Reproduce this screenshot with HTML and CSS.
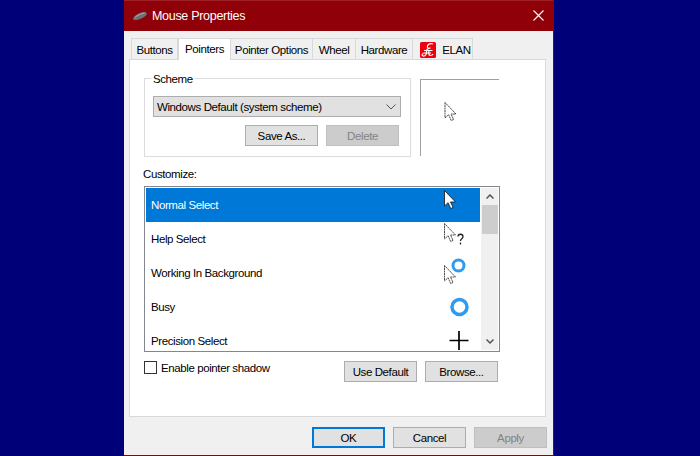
FILE: index.html
```html
<!DOCTYPE html>
<html lang="en">
<head>
<meta charset="utf-8">
<title>Mouse Properties</title>
<link rel="stylesheet" href="styles.css">
</head>
<body>
<svg class="defs" width="0" height="0" aria-hidden="true">
  <defs>
    <path id="arrow" d="M0 0V15.5L3.6 12.2L6.2 18L8.6 17L6 11.5H11Z"/>
  </defs>
</svg>
<div class="window">
  <header class="titlebar">
    <svg class="mouse-icon" width="16" height="10" viewBox="0 0 16 10"><path d="M1 7.500C1 5.500 8 1 12 1C15 1 15.500 3 14 4.500C11.500 7 5 9.500 2.500 9C1.500 8.800 1 8.400 1 7.500Z" fill="#6d7275"/><path d="M3 6.500C5 4.500 9 2.500 12.500 2" stroke="#a9adb0" fill="none"/></svg>
    <span class="title">Mouse Properties</span>
    <svg class="close" width="11" height="11" viewBox="0 0 11 11"><path d="M0.500 0.500L10.500 10.500M10.500 0.500L0.500 10.500" stroke="#fff" stroke-width="1.100"/></svg>
  </header>
  <nav class="tabs">
    <span class="tab tab-buttons">Buttons</span>
    <span class="tab tab-pointers">Pointers</span>
    <span class="tab tab-options">Pointer Options</span>
    <span class="tab tab-wheel">Wheel</span>
    <span class="tab tab-hardware">Hardware</span>
    <span class="tab tab-elan">
      <svg width="16" height="16" viewBox="0 0 16 16"><rect width="16" height="16" rx="1.500" fill="#f0000f"/><path d="M13 2C10.500 1 8 2 7.500 4C7 6 8.500 7 10.500 6M10.500 6C8 6 6.500 7.500 6.500 9.500C6.500 12 5.500 14.500 3 14C1.500 13.500 2 11.500 3.500 11.500M4 8.500H12.500M3.500 11H11M9 9C8.500 11 8.500 13.500 10.500 13.500C11.500 13.500 12.500 13 13 12" stroke="#fff" stroke-width="1.200" fill="none"/></svg>
      ELAN
    </span>
  </nav>
  <main class="panel">
    <div class="top-row">
      <section class="scheme">
        <span class="legend">Scheme</span>
        <div class="select">
          <span>Windows Default (system scheme)</span>
          <svg width="10" height="6" viewBox="0 0 10 6"><path d="M0.500 0.500L5 5L9.500 0.500" stroke="#555" fill="none"/></svg>
        </div>
        <div class="scheme-actions">
          <span class="btn">Save As...</span>
          <span class="btn btn-disabled">Delete</span>
        </div>
      </section>
      <div class="preview">
        <svg width="14" height="20" viewBox="0 0 14 20"><use href="#arrow" x="1" y="0.500" fill="#fff" stroke="#222" stroke-width="0.800" stroke-dasharray="2 0.500"/></svg>
      </div>
    </div>
    <label class="customize-label">Customize:</label>
    <div class="list">
      <div class="rows">
        <div class="row row-selected">
          <span class="row-text">Normal Select</span>
          <svg width="30" height="34" viewBox="0 0 30 34"><use href="#arrow" x="4.500" y="2.500" fill="#fff" stroke="#111" stroke-width="0.800"/></svg>
        </div>
        <div class="row">
          <span class="row-text">Help Select</span>
          <svg width="30" height="34" viewBox="0 0 30 34"><use href="#arrow" x="4.500" y="1.500" fill="#fff" stroke="#222" stroke-width="0.800" stroke-dasharray="2 0.500"/><path d="M18 14.500C18 11.500 23 11.500 23 14.500C23 17 20.500 16.500 20.500 19M20.500 20.500V22.500" stroke="#222" stroke-width="1.300" fill="none"/></svg>
        </div>
        <div class="row">
          <span class="row-text">Working In Background</span>
          <svg width="30" height="34" viewBox="0 0 30 34"><use href="#arrow" x="4.500" y="9.500" fill="#fff" stroke="#222" stroke-width="0.800" stroke-dasharray="2 0.500"/><circle cx="18.500" cy="9.500" r="5.500" fill="none" stroke="#2e9bf0" stroke-width="3"/></svg>
        </div>
        <div class="row">
          <span class="row-text">Busy</span>
          <svg width="30" height="34" viewBox="0 0 30 34"><circle cx="19.500" cy="17" r="7.500" fill="none" stroke="#2e9bf0" stroke-width="3.500"/></svg>
        </div>
        <div class="row row-clipped">
          <span class="row-text">Precision Select</span>
          <svg width="30" height="34" viewBox="0 0 30 34"><path d="M9.500 16.500H28.500M19 7V26" stroke="#000" stroke-width="1.700"/></svg>
        </div>
      </div>
      <div class="scrollbar">
        <svg class="scroll-arrow" width="8" height="5" viewBox="0 0 8 5"><path d="M0.500 4.500L4 1L7.500 4.500" stroke="#555" stroke-width="1.500" fill="none"/></svg>
        <div class="thumb"></div>
        <svg class="scroll-arrow scroll-down" width="8" height="5" viewBox="0 0 8 5"><path d="M0.500 0.500L4 4L7.500 0.500" stroke="#555" stroke-width="1.500" fill="none"/></svg>
      </div>
    </div>
    <div class="list-actions">
      <label class="check"><span class="box"></span>Enable pointer shadow</label>
      <div class="list-buttons">
        <span class="btn">Use Default</span>
        <span class="btn">Browse...</span>
      </div>
    </div>
  </main>
  <footer class="footer">
    <span class="btn btn-default">OK</span>
    <span class="btn">Cancel</span>
    <span class="btn btn-disabled">Apply</span>
  </footer>
</div>
</body>
</html>
```

FILE: styles.css
```css
* { box-sizing: border-box; }
html, body { margin: 0; height: 100%; }
body {
  background: #000078;
  font-family: "Liberation Sans", Arial, sans-serif;
  font-size: 11.5px;
  letter-spacing: -0.4px;
  color: #000;
  overflow: hidden;
}
.defs { position: absolute; }
.window {
  width: 430px;
  height: 456px;
  margin-left: 124px;
  background: #f0f0f0;
  border-right: 1px solid #8f0009;
  border-bottom: 1px solid #8f0009;
  display: flex;
  flex-direction: column;
}
.titlebar {
  height: 31px;
  flex: none;
  background: #900008;
  border-top: 1px solid #a02028;
  color: #fff;
  display: flex;
  align-items: center;
  padding: 0 9px 0 8px;
}
.mouse-icon { margin-right: 4px; }
.close { margin-bottom: 1px; }
.title { font-size: 12.5px; letter-spacing: -0.3px; flex: 1; }
.tabs {
  display: flex;
  height: 28px;
  flex: none;
  padding: 7px 0 0 7px;
  align-items: flex-end;
}
.tab {
  height: 21px;
  border: 1px solid #d9d9d9;
  border-bottom: 0;
  border-left: 0;
  display: flex;
  align-items: center;
  justify-content: center;
  white-space: nowrap;
  gap: 6px;
  padding-top: 2px;
}
.tab-buttons { width: 47px; border-left: 1px solid #d9d9d9; }
.tab-pointers {
  width: 53px;
  height: 22px;
  margin-bottom: -1px;
  background: #fff;
  border-left: 1px solid #d9d9d9;
  margin-top: -1px;
  position: relative;
  z-index: 1;
  padding: 0 0 2px;
}
.tab-options { width: 82px; }
.tab-wheel { width: 43px; }
.tab-hardware { width: 57px; }
.tab-elan { width: 60px; padding-left: 6px; }
.panel {
  width: 417px;
  height: 358px;
  margin-left: 5px;
  flex: none;
  background: #fff;
  border: 1px solid #d9d9d9;
  padding: 18px 0 0 14px;
}
.top-row { display: flex; gap: 9px; align-items: flex-start; }
.scheme {
  width: 267px;
  height: 79px;
  border: 1px solid #dcdcdc;
  padding: 17px 10px 0 8px;
  position: relative;
}
.legend {
  position: absolute;
  left: 6px;
  top: -7px;
  background: #fff;
  padding: 0 2px;
  line-height: 15px;
}
.select {
  height: 21px;
  width: 248px;
  background: #e1e1e1;
  border: 1px solid #adadad;
  display: flex;
  align-items: center;
  justify-content: space-between;
  padding: 0 4px 0 3px;
}
.scheme-actions {
  display: flex;
  justify-content: flex-end;
  gap: 8px;
  margin-top: 8px;
  padding-right: 1px;
}
.btn {
  width: 73px;
  height: 21px;
  background: #e1e1e1;
  border: 1px solid #adadad;
  display: flex;
  align-items: center;
  justify-content: center;
  white-space: nowrap;
  flex: none;
}
.btn-disabled {
  background: #cccccc;
  border-color: #bfbfbf;
  color: #838383;
}
.btn-default { border: 2px solid #0078d7; }
.preview {
  width: 79px;
  height: 77px;
  margin-top: 1px;
  border-top: 1px solid #a0a0a0;
  border-left: 1px solid #a0a0a0;
  padding: 22px 0 0 23px;
}
.preview svg { display: block; }
.customize-label { display: block; margin: 9px 0 0 -1px; line-height: 16px; height: 20px; }
.list {
  width: 356px;
  height: 166px;
  border: 1px solid #828790;
  padding: 1px;
  display: flex;
}
.rows { width: 335px; height: 162px; overflow: hidden; }
.row {
  height: 34px;
  display: flex;
  align-items: center;
  justify-content: space-between;
  padding: 0 10px 0 5px;
}
.row-text { margin-top: -1px; }
.row svg { flex: none; }
.row-selected { background: #0078d7; color: #fff; }
.scrollbar {
  width: 17px;
  margin-left: 1px;
  height: 162px;
  background: #f0f0f0;
  display: flex;
  flex-direction: column;
  align-items: center;
}
.scroll-arrow { margin-top: 6px; flex: none; }
.scroll-down { margin-top: auto; margin-bottom: 6px; }
.thumb { width: 16px; height: 29px; margin-top: 6px; background: #cdcdcd; }
.list-actions {
  display: flex;
  justify-content: space-between;
  width: 354px;
  margin-top: 9px;
}
.check { display: flex; align-items: flex-start; gap: 4px; line-height: 14px; }
.box { width: 13px; height: 13px; border: 1px solid #333; background: #fff; }
.list-buttons { display: flex; gap: 8px; }
.footer {
  display: flex;
  justify-content: flex-end;
  gap: 8px;
  padding: 10px 6px 0 0;
}
```
